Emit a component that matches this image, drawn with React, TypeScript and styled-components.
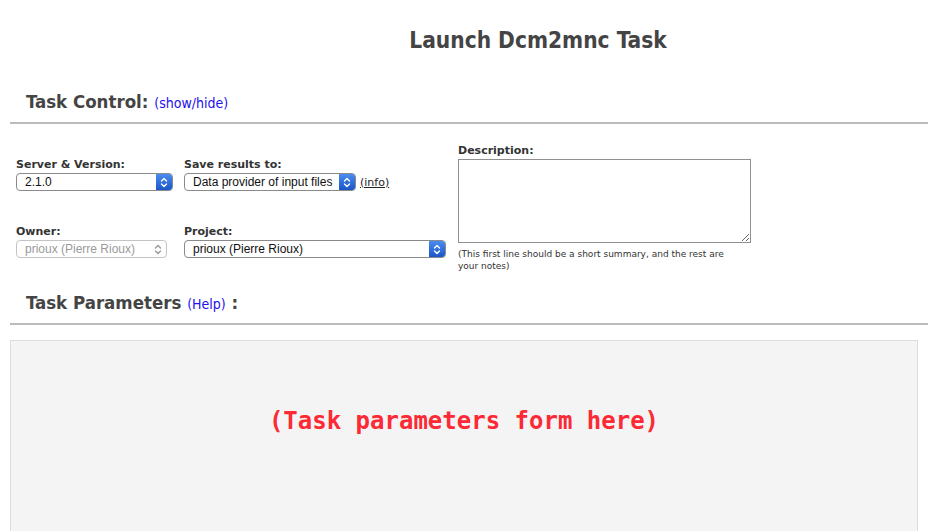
import React from "react";
import styled, { createGlobalStyle } from "styled-components";

const Global = createGlobalStyle`
  html, body { margin: 0; padding: 0; background: #fff; }
  body { font-family: "DejaVu Sans", Verdana, sans-serif; color: #333; overflow: hidden; }
`;

const Page = styled.div`
  width: 928px;
  height: 531px;
  overflow: hidden;
`;

const Title = styled.h1`
  margin: 0;
  padding: 26px 0 0 148px;
  height: 60px;
  box-sizing: border-box;
  text-align: center;
  font-family: "DejaVu Sans Condensed", "DejaVu Sans", sans-serif;
  font-weight: bold;
  font-size: 22.5px;
  line-height: 28px;
  color: #444;
`;

const SectionHead = styled.h2<{ $top: number }>`
  margin: ${(p) => p.$top}px 0 0 0;
  padding: 0 0 0 26px;
  font-family: "DejaVu Sans Condensed", "DejaVu Sans", sans-serif;
  font-weight: bold;
  font-size: 18.5px;
  line-height: 24px;
  color: #444;
`;

const HeadLink = styled.a`
  font-size: 14px;
  font-weight: normal;
  color: #2211ee;
  text-decoration: none;
`;

const Rule = styled.hr<{ $top: number }>`
  margin: ${(p) => p.$top}px 0 0 10px;
  border: 0;
  height: 2px;
  background: #bbbbbb;
`;

const Control = styled.div`
  display: flex;
  padding: 20px 0 0 16px;
`;

const LeftFields = styled.div`
  display: grid;
  grid-template-columns: 168px 274px;
  row-gap: 34px;
  padding-top: 14px;
  align-content: start;
`;

const Field = styled.div`
  display: flex;
  flex-direction: column;
  align-items: flex-start;
`;

const Label = styled.label`
  font-weight: bold;
  font-size: 11px;
  line-height: 13px;
  color: #333;
  margin-bottom: 2px;
`;

const SelectRow = styled.div`
  display: flex;
  align-items: center;
  gap: 4px;
`;

const SelectBox = styled.div<{ $w: number; $disabled?: boolean }>`
  width: ${(p) => p.$w}px;
  height: 18px;
  box-sizing: border-box;
  display: flex;
  align-items: stretch;
  border: 1px solid ${(p) => (p.$disabled ? "#c4c4c4" : "#8a8a8a")};
  border-radius: 4px;
  background: #fff;
  overflow: hidden;
  font-family: "Liberation Sans", Arial, sans-serif;
  font-size: 12px;
  color: ${(p) => (p.$disabled ? "#9a9a9a" : "#111")};
`;

const SelectText = styled.span`
  flex: 1;
  padding-left: 8px;
  line-height: 16px;
  white-space: nowrap;
  overflow: hidden;
`;

const Stepper = styled.span<{ $disabled?: boolean }>`
  width: 16px;
  display: flex;
  align-items: center;
  justify-content: center;
  background: ${(p) =>
    p.$disabled ? "transparent" : "linear-gradient(#4a8cf0, #1a56c8)"};
  color: ${(p) => (p.$disabled ? "#9a9a9a" : "#fff")};
`;

const InfoLink = styled.a`
  font-family: "DejaVu Sans", Verdana, sans-serif;
  font-size: 11px;
  color: #222;
  text-decoration: underline;
`;

const DescCol = styled.div`
  display: flex;
  flex-direction: column;
  align-items: flex-start;
`;

const DescLabel = styled(Label)`
  margin-bottom: 2px;
`;

const TextArea = styled.textarea`
  display: block;
  width: 293px;
  height: 84px;
  box-sizing: border-box;
  border: 1px solid #8f8f8f;
  margin: 0;
  padding: 2px;
  resize: both;
`;

const Hint = styled.div`
  width: 275px;
  margin-top: 5px;
  font-size: 9px;
  line-height: 12px;
  color: #333;
`;

const ParamsBox = styled.div`
  margin: 15px 10px 0 10px;
  height: 220px;
  box-sizing: border-box;
  background: #f4f4f4;
  border: 1px solid #dddddd;
  display: flex;
  justify-content: center;
  padding-top: 65px;
`;

const Placeholder = styled.div`
  font-family: "DejaVu Sans Mono", "Liberation Mono", monospace;
  font-weight: bold;
  font-size: 24px;
  line-height: 30px;
  color: #fb2a35;
`;

const Chevrons = () => (
  <svg width="8" height="11" viewBox="0 0 8 11" fill="none" stroke="currentColor" strokeWidth="1.4" strokeLinecap="round" strokeLinejoin="round">
    <path d="M1.5 4 L4 1.5 L6.5 4" />
    <path d="M1.5 7 L4 9.5 L6.5 7" />
  </svg>
);

const Select = ({ w, value, disabled }: { w: number; value: string; disabled?: boolean }) => (
  <SelectBox $w={w} $disabled={disabled}>
    <SelectText>{value}</SelectText>
    <Stepper $disabled={disabled}>
      <Chevrons />
    </Stepper>
  </SelectBox>
);

export default function App() {
  return (
    <Page>
      <Global />
      <Title>Launch Dcm2mnc Task</Title>
      <SectionHead $top={30}>
        Task Control: <HeadLink href="#">(show/hide)</HeadLink>
      </SectionHead>
      <Rule $top={7} />
      <Control>
        <LeftFields>
          <Field>
            <Label>Server &amp; Version:</Label>
            <Select w={157} value="2.1.0" />
          </Field>
          <Field>
            <Label>Save results to:</Label>
            <SelectRow>
              <Select w={172} value="Data provider of input files" />
              <InfoLink href="#">(info)</InfoLink>
            </SelectRow>
          </Field>
          <Field>
            <Label>Owner:</Label>
            <Select w={151} value="prioux (Pierre Rioux)" disabled />
          </Field>
          <Field>
            <Label>Project:</Label>
            <Select w={262} value="prioux (Pierre Rioux)" />
          </Field>
        </LeftFields>
        <DescCol>
          <DescLabel>Description:</DescLabel>
          <TextArea />
          <Hint>(This first line should be a short summary, and the rest are your notes)</Hint>
        </DescCol>
      </Control>
      <SectionHead $top={19}>
        Task Parameters <HeadLink href="#">(Help)</HeadLink> :
      </SectionHead>
      <Rule $top={7} />
      <ParamsBox>
        <Placeholder>(Task parameters form here)</Placeholder>
      </ParamsBox>
    </Page>
  );
}
